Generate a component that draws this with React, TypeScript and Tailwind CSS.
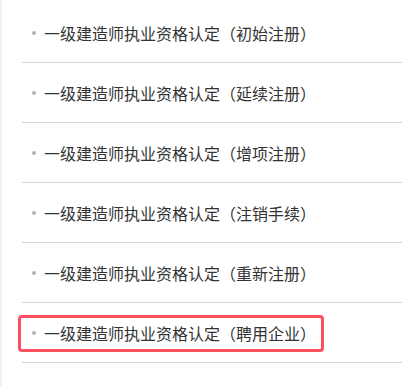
const items = [
  "初始注册",
  "延续注册",
  "增项注册",
  "注销手续",
  "重新注册",
  "聘用企业",
];

export default function App() {
  return (
    <div className="flex h-[386px] w-[402px] bg-white font-['Noto_Sans_CJK_SC','Noto_Sans',sans-serif]">
      <div className="w-[2px] shrink-0 bg-[#f2f2f2]" />
      <ul className="ml-[20px] flex-1 pt-[3px]">
        {items.map((name, i) => (
          <li
            key={name}
            className="relative flex h-[60px] items-center border-b border-[#d6d6d6] pl-[10px]"
          >
            <span className="h-[4px] w-[4px] shrink-0 rounded-full bg-[#b3b3b3]" />
            <a className="ml-[8px] text-[16px] leading-none text-[#333333] [text-spacing-trim:space-all]">
              一级建造师执业资格认定（{name}）
            </a>
            {i === items.length - 1 && (
              <span className="pointer-events-none absolute left-[-4px] top-[12px] h-[37px] w-[306px] rounded-[4px] border-[3px] border-[#fd4f5f]" />
            )}
          </li>
        ))}
      </ul>
    </div>
  );
}
